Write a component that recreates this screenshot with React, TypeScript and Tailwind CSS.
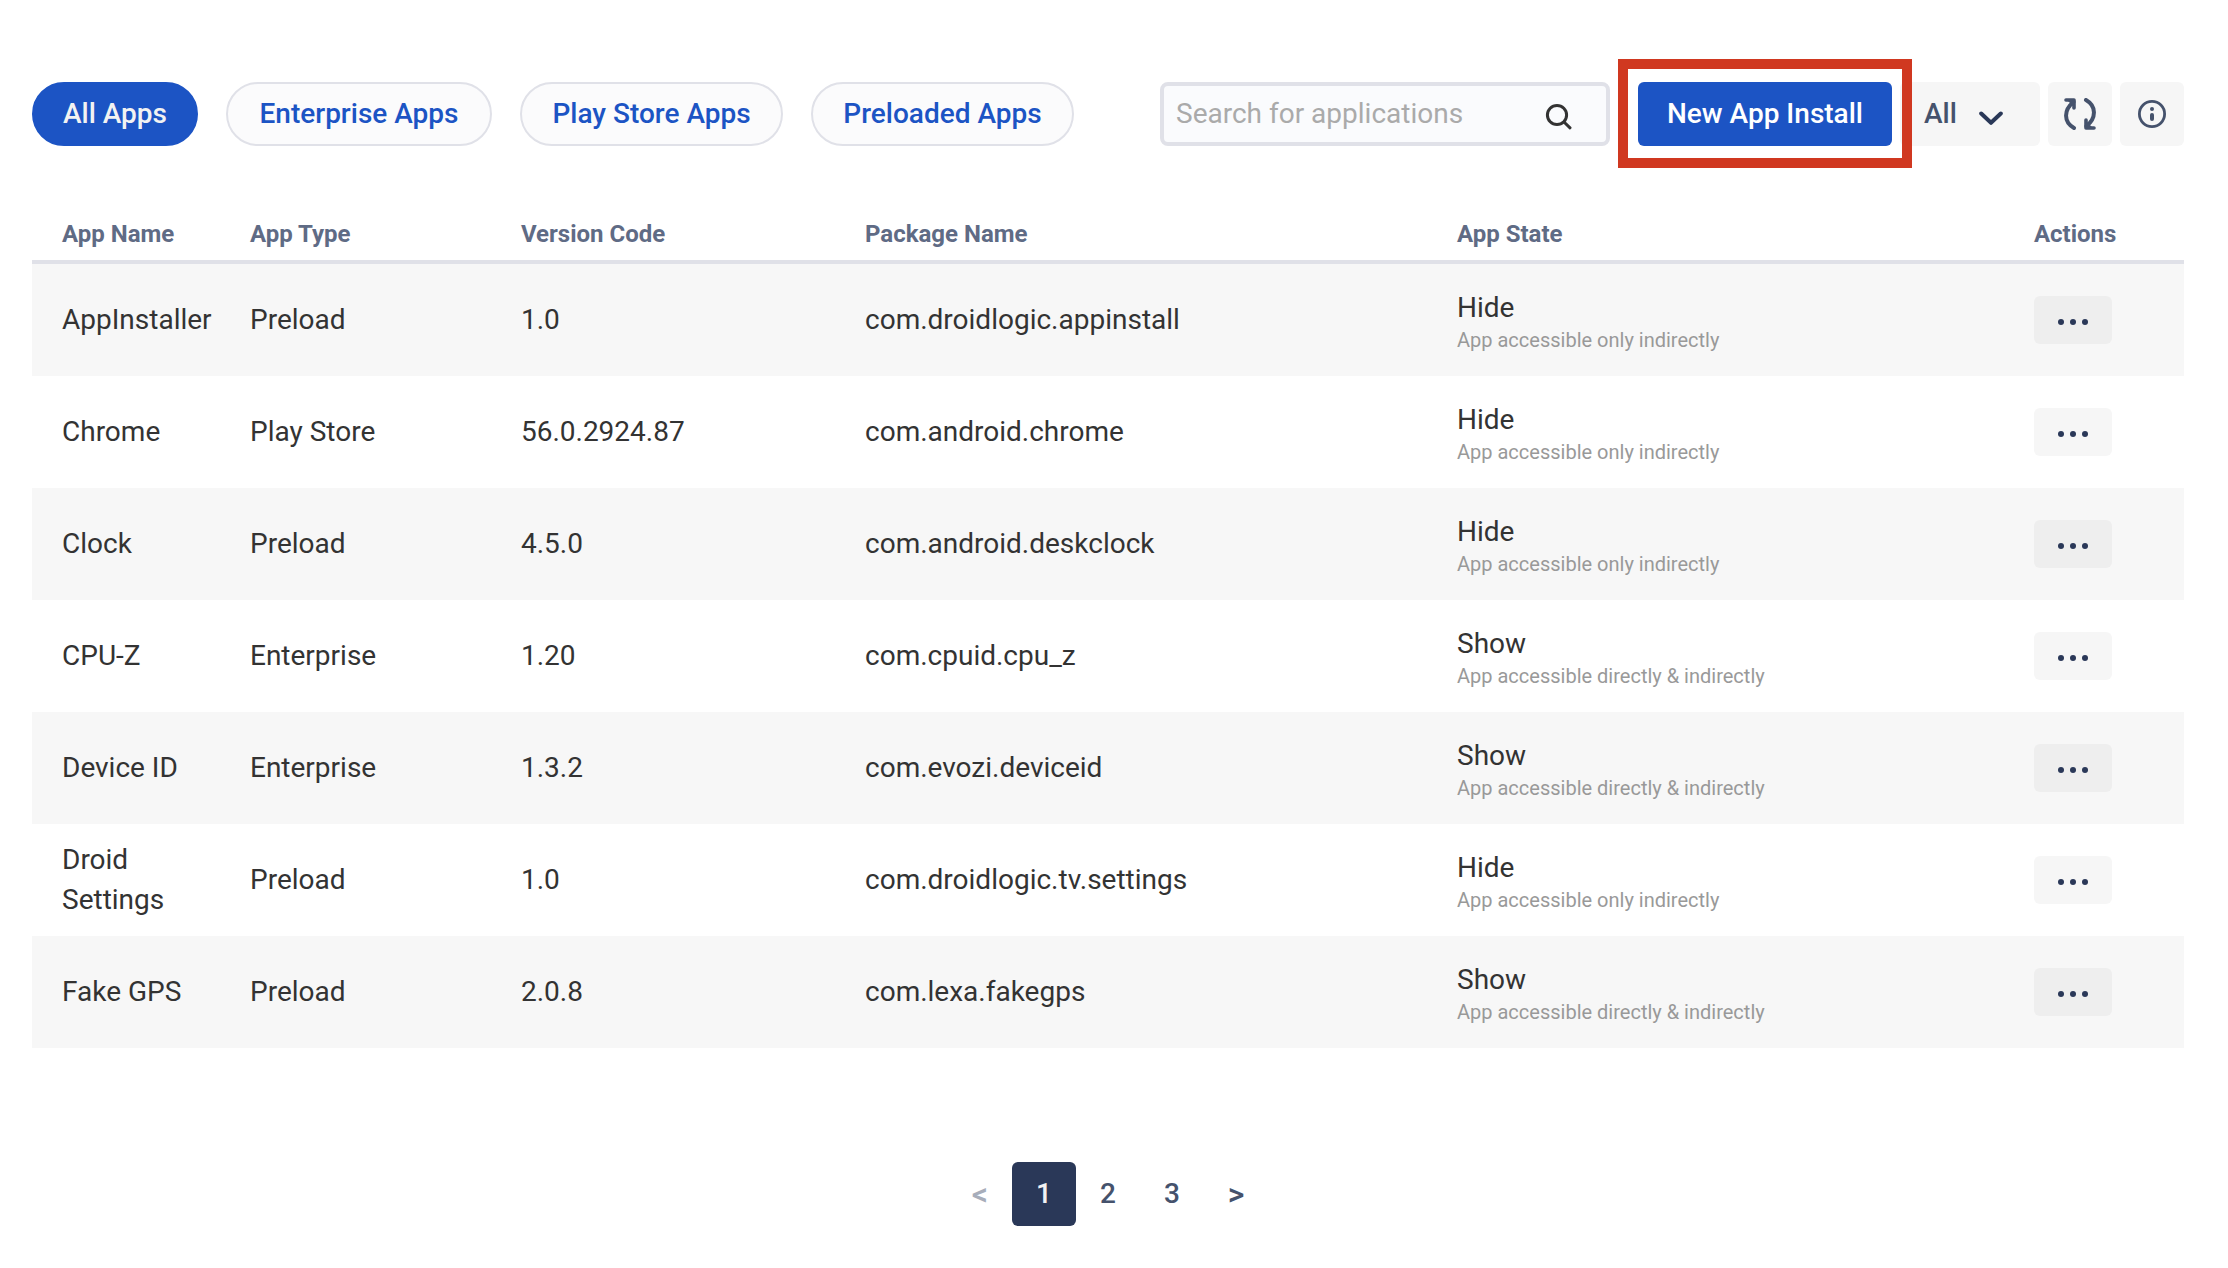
const tabs = [
  { label: "All Apps", cls: "w-[166px] border-[#1c54c4] bg-[#1c54c4] text-[#f2f2f2]" },
  { label: "Enterprise Apps", cls: "w-[266px] border-[#e0e1e8] bg-[#fbfbfc] text-[#1c54c4]" },
  { label: "Play Store Apps", cls: "w-[263px] border-[#e0e1e8] bg-[#fbfbfc] text-[#1c54c4]" },
  { label: "Preloaded Apps", cls: "w-[263px] border-[#e0e1e8] bg-[#fbfbfc] text-[#1c54c4]" },
];

const HIDE = "App accessible only indirectly";
const SHOW = "App accessible directly & indirectly";

const apps = [
  { name: "AppInstaller", type: "Preload", version: "1.0", pkg: "com.droidlogic.appinstall", state: "Hide" },
  { name: "Chrome", type: "Play Store", version: "56.0.2924.87", pkg: "com.android.chrome", state: "Hide" },
  { name: "Clock", type: "Preload", version: "4.5.0", pkg: "com.android.deskclock", state: "Hide" },
  { name: "CPU-Z", type: "Enterprise", version: "1.20", pkg: "com.cpuid.cpu_z", state: "Show" },
  { name: "Device ID", type: "Enterprise", version: "1.3.2", pkg: "com.evozi.deviceid", state: "Show" },
  { name: "Droid Settings", type: "Preload", version: "1.0", pkg: "com.droidlogic.tv.settings", state: "Hide" },
  { name: "Fake GPS", type: "Preload", version: "2.0.8", pkg: "com.lexa.fakegps", state: "Show" },
];

const columns = [
  { label: "App Name", cls: "w-[10.13%] pl-[30px]" },
  { label: "App Type", cls: "w-[12.59%]" },
  { label: "Version Code", cls: "w-[15.99%]" },
  { label: "Package Name", cls: "w-[27.51%]" },
  { label: "App State", cls: "w-[26.81%]" },
  { label: "Actions", cls: "w-[6.97%]" },
];

function SearchIcon() {
  return (
    <svg width="28" height="32" viewBox="0 0 28 32" fill="none" stroke="#333" strokeWidth="3" strokeLinecap="round">
      <circle cx="13" cy="17" r="9.6" />
      <path d="M20 24l6 5.800" />
    </svg>
  );
}

function ChevronIcon() {
  return (
    <svg className="mt-2" width="24" height="15" viewBox="0 0 24 15" fill="none" stroke="#2a3858" strokeWidth="4" strokeLinecap="round" strokeLinejoin="round">
      <path d="M2.200 2.500L12 11.800l9.800-9.300" />
    </svg>
  );
}

function RefreshIcon() {
  return (
    <svg width="32" height="32" viewBox="0 0 32 32" fill="none" stroke="#45526c" strokeWidth="4" strokeLinecap="round" strokeLinejoin="round">
      <path d="M9.500 4C-.5 12-.5 24 10 30" />
      <path d="M22 2c10.500 6 10.500 18 .5 26" />
      <path d="M2 2h8v8M30 30h-8v-8" strokeWidth="3.600" />
      <path d="M3 2h7v7zM29 30h-7v-7z" fill="#45526c" stroke="none" />
    </svg>
  );
}

function InfoIcon() {
  return (
    <svg width="28" height="28" viewBox="0 0 28 28" fill="none" stroke="#45526c" strokeLinecap="round">
      <circle cx="14" cy="14" r="12.600" strokeWidth="2.800" />
      <path d="M14 15v4" strokeWidth="4" />
      <circle cx="14" cy="9" r="2" fill="#45526c" stroke="none" />
    </svg>
  );
}

function DotsIcon() {
  return (
    <svg width="32" height="6" viewBox="0 0 32 6" fill="#2a3858">
      <circle cx="4" cy="3" r="3" />
      <circle cx="16" cy="3" r="3" />
      <circle cx="28" cy="3" r="3" />
    </svg>
  );
}

export default function App() {
  return (
    <main className="min-h-screen bg-white pt-[82px] pr-11 pb-10 pl-8 font-['Roboto',sans-serif] text-[28px] leading-10 text-[#333]">
      <div className="flex items-center justify-between gap-7">
        <nav className="flex gap-7" aria-label="App categories">
          {tabs.map((tab) => (
            <button key={tab.label} className={tab.cls + " h-16 rounded-full border-2 font-medium whitespace-nowrap"}>
              {tab.label}
            </button>
          ))}
        </nav>
        <div className="flex gap-2">
          <label className="mr-5 flex h-16 w-[450px] items-center rounded-lg border-4 border-[#e0e1e8] bg-[#fafbfd] pr-[34px] pl-3">
            <input
              type="text"
              aria-label="Search for applications"
              placeholder="Search for applications"
              className="min-w-0 flex-1 bg-transparent outline-none placeholder:text-[#aaa]"
            />
            <SearchIcon />
          </label>
          <div className="relative z-10">
            <button className="h-16 w-[254px] rounded-md bg-[#1c54c4] font-medium whitespace-nowrap text-white">New App Install</button>
            <div className="pointer-events-none absolute -inset-x-5 -top-[23px] -bottom-[22px] border-10 border-[#d03820]" />
          </div>
          <button className="flex h-16 w-[140px] items-center gap-[22px] rounded-md bg-[#f6f6f6] pl-6 font-medium text-[#45526c]">
            All
            <ChevronIcon />
          </button>
          <button aria-label="Refresh" className="flex size-16 items-center justify-center rounded-md bg-[#f6f6f6]">
            <RefreshIcon />
          </button>
          <button aria-label="Information" className="flex size-16 items-center justify-center rounded-md bg-[#f6f6f6]">
            <InfoIcon />
          </button>
        </div>
      </div>

      <table className="mt-[66px] w-full table-fixed border-separate border-spacing-0 text-left">
        <thead>
          <tr className="h-[52px] align-top text-2xl text-[#5f6b85]">
            {columns.map((c) => (
              <th key={c.label} scope="col" className={c.cls + " border-b-4 border-[#e0e1e8] pb-1 leading-11 font-bold whitespace-nowrap"}>
                {c.label}
              </th>
            ))}
          </tr>
        </thead>
        <tbody>
          {apps.map((app) => (
            <tr key={app.name} className="group h-28 odd:bg-[#f7f7f7]">
              <td className="pr-6 pl-[30px]">{app.name}</td>
              <td>{app.type}</td>
              <td>{app.version}</td>
              <td>{app.pkg}</td>
              <td className="pt-1">
                <div className="leading-9">{app.state}</div>
                <div className="text-xl leading-7 text-[#999]">{app.state === "Hide" ? HIDE : SHOW}</div>
              </td>
              <td>
                <button
                  aria-label={"Actions for " + app.name}
                  className="flex h-12 w-[78px] items-center justify-center rounded-md bg-[#f6f6f6] pt-1 group-odd:bg-[#eeeeee]"
                >
                  <DotsIcon />
                </button>
              </td>
            </tr>
          ))}
        </tbody>
      </table>

      <nav className="mt-[114px] flex justify-center font-medium text-[#45526c]" aria-label="Pagination">
        <button aria-label="Previous page" disabled className="size-16 text-[32px] text-[#a7adba]">&lt;</button>
        <button aria-current="page" className="size-16 rounded-md bg-[#2a3858] text-[#f2f2f2]">1</button>
        <button className="size-16">2</button>
        <button className="size-16">3</button>
        <button aria-label="Next page" className="size-16 text-[32px]">&gt;</button>
      </nav>
    </main>
  );
}
